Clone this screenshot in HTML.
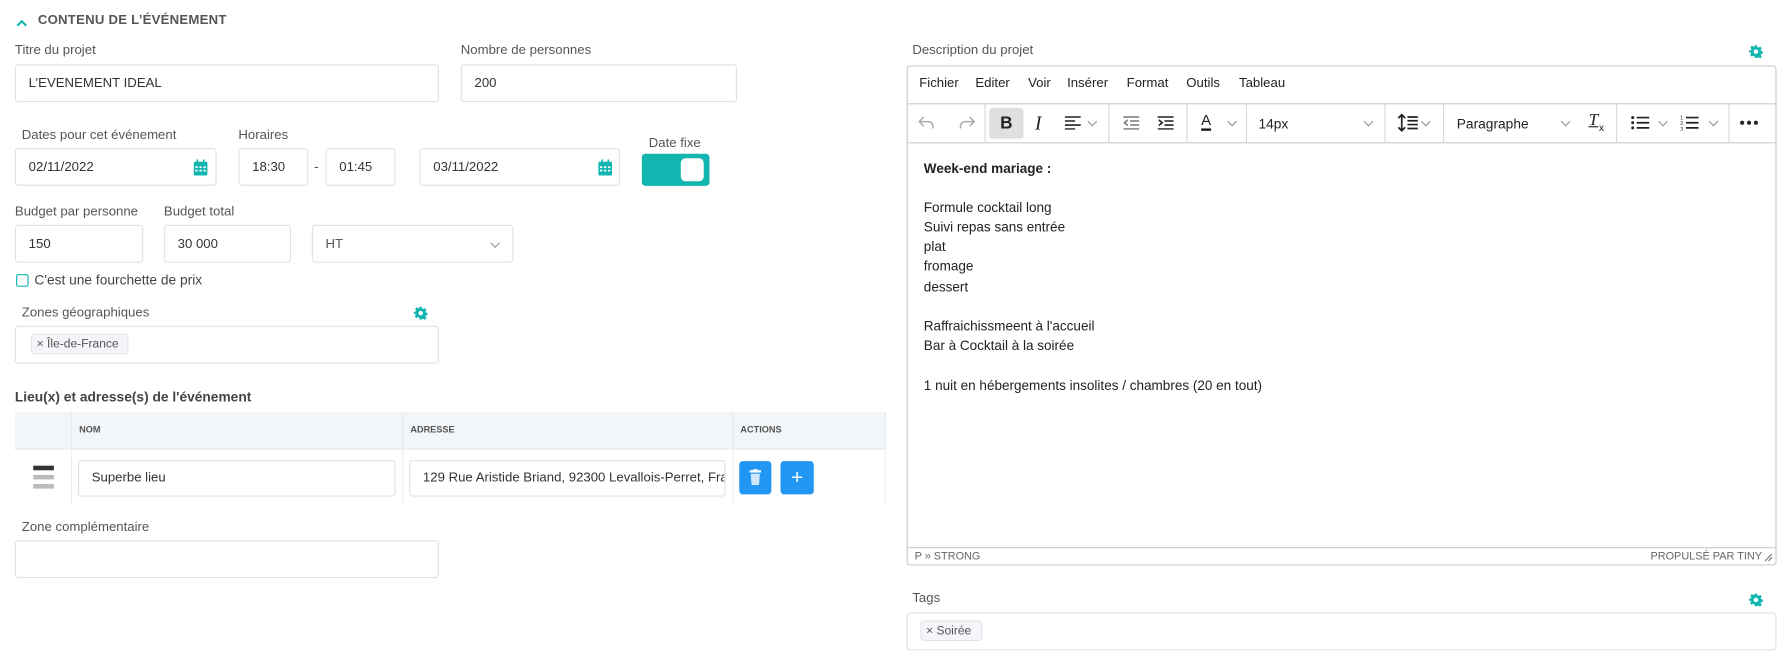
<!DOCTYPE html>
<html><head><meta charset="utf-8"><style>
html,body{margin:0;padding:0;background:#fff;overflow:hidden}
body{width:1788px;height:671px}
#w{position:absolute;left:0;top:0;width:1560px;height:585px;transform:scale(1.14615,1.147);transform-origin:0 0;font-family:"Liberation Sans",sans-serif;color:#333}
.a{position:absolute}
.lbl{position:absolute;font-size:11.5px;color:#555;line-height:14px}
.in{position:absolute;border:1px solid #dfe2e6;border-radius:3px;box-sizing:border-box;font-size:11.5px;color:#333;line-height:14px;display:flex;align-items:center;padding-left:11px;background:#fff}
.gear{position:absolute;width:12px;height:12px}
.chip{position:absolute;background:#f3f5f8;border:1px solid #e2e5ea;border-radius:3px;box-sizing:border-box;font-size:10.5px;color:#555;display:flex;align-items:center;padding-left:4px}
.th{position:absolute;top:359px;height:32px;font-size:8px;font-weight:bold;color:#555;line-height:32px;padding-left:6px;box-sizing:border-box;border-left:1px solid #e6e9ed}
.mi{position:absolute;top:67px;font-size:11.5px;color:#222}
.sep{position:absolute;top:91px;width:1px;height:33px;background:#d8d8d8}
.ed{position:absolute;left:806px;font-size:11.8px;color:#222;line-height:14px}
.cv{position:absolute;width:5px;height:5px;border-right:1px solid #999;border-bottom:1px solid #999;transform:rotate(45deg)}
</style></head><body><div id="w">
<svg class="a" style="left:14px;top:16px" width="10" height="8" viewBox="0 0 10 8"><path d="M1 6.5 5 2.5 9 6.5" fill="none" stroke="#12b5b0" stroke-width="1.8"/></svg>
<div class="a" style="left:33px;top:12px;font-size:11.5px;font-weight:bold;color:#555;letter-spacing:.2px">CONTENU DE L’ÉVÉNEMENT</div>

<div class="lbl" style="left:13px;top:37px">Titre du projet</div>
<div class="in" style="left:13px;top:56px;width:370px;height:33px">L’EVENEMENT IDEAL</div>
<div class="lbl" style="left:402px;top:37px">Nombre de personnes</div>
<div class="in" style="left:402px;top:56px;width:241px;height:33px">200</div>

<div class="lbl" style="left:19px;top:111px">Dates pour cet événement</div>
<div class="in" style="left:13px;top:129px;width:176px;height:33px">02/11/2022</div>
<svg class="a" style="left:169px;top:139px" width="12" height="14" viewBox="0 0 12 14"><rect x="0" y="2" width="12" height="12" rx="1" fill="#12b5b0"/><rect x="2.5" y="0" width="1.5" height="3" fill="#12b5b0"/><rect x="8" y="0" width="1.5" height="3" fill="#12b5b0"/><g fill="#fff"><rect x="1.5" y="6" width="2" height="1.5"/><rect x="5" y="6" width="2" height="1.5"/><rect x="8.5" y="6" width="2" height="1.5"/><rect x="1.5" y="9" width="2" height="1.5"/><rect x="5" y="9" width="2" height="1.5"/><rect x="8.5" y="9" width="2" height="1.5"/></g></svg>
<div class="lbl" style="left:208px;top:111px">Horaires</div>
<div class="in" style="left:208px;top:129px;width:61px;height:33px">18:30</div>
<div class="a" style="left:274px;top:138px;font-size:12px;color:#555">-</div>
<div class="in" style="left:284px;top:129px;width:61px;height:33px">01:45</div>
<div class="in" style="left:366px;top:129px;width:175px;height:33px">03/11/2022</div>
<svg class="a" style="left:522px;top:139px" width="12" height="14" viewBox="0 0 12 14"><rect x="0" y="2" width="12" height="12" rx="1" fill="#12b5b0"/><rect x="2.5" y="0" width="1.5" height="3" fill="#12b5b0"/><rect x="8" y="0" width="1.5" height="3" fill="#12b5b0"/><g fill="#fff"><rect x="1.5" y="6" width="2" height="1.5"/><rect x="5" y="6" width="2" height="1.5"/><rect x="8.5" y="6" width="2" height="1.5"/><rect x="1.5" y="9" width="2" height="1.5"/><rect x="5" y="9" width="2" height="1.5"/><rect x="8.5" y="9" width="2" height="1.5"/></g></svg>
<div class="lbl" style="left:566px;top:118px">Date fixe</div>
<div class="a" style="left:560px;top:134px;width:59px;height:28px;background:#12b5b0;border-radius:3px"></div>
<div class="a" style="left:594px;top:138px;width:20px;height:20px;background:#fff;border-radius:4px"></div>

<div class="lbl" style="left:13px;top:178px">Budget par personne</div>
<div class="in" style="left:13px;top:196px;width:112px;height:33px">150</div>
<div class="lbl" style="left:143px;top:178px">Budget total</div>
<div class="in" style="left:143px;top:196px;width:111px;height:33px">30 000</div>
<div class="in" style="left:272px;top:196px;width:176px;height:33px;color:#555">HT</div>
<div class="cv" style="left:429px;top:209px"></div>
<div class="a" style="left:14px;top:239px;width:11px;height:11px;border:1.5px solid #12b5b0;border-radius:2px;box-sizing:border-box"></div>
<div class="a" style="left:30px;top:237px;font-size:12px;color:#444">C'est une fourchette de prix</div>

<div class="lbl" style="left:19px;top:266px">Zones géographiques</div>
<svg class="gear" style="left:361px;top:267px" viewBox="0 0 24 24"><path fill="#12b5b0" d="M10 1h4l.6 3.2 2 .9 2.8-1.8 2.8 2.8-1.8 2.8.9 2 3.2.6v4l-3.2.6-.9 2 1.8 2.8-2.8 2.8-2.8-1.8-2 .9L14 23h-4l-.6-3.2-2-.9-2.8 1.8-2.8-2.8 1.8-2.8-.9-2L0 14v-4l3.2-.6.9-2L2.3 4.6l2.8-2.8 2.8 1.8 2-.9zM12 8a4 4 0 1 0 0 8 4 4 0 0 0 0-8z"/></svg>
<div class="in" style="left:13px;top:284px;width:370px;height:33px"></div>
<div class="chip" style="left:27px;top:291px;width:85px;height:18px">× Île-de-France</div>

<div class="a" style="left:13px;top:339px;font-size:12px;font-weight:bold;color:#444">Lieu(x) et adresse(s) de l'événement</div>
<div class="a" style="left:13px;top:359px;width:760px;height:32px;background:#f3f6f9;border-bottom:1px solid #e6e9ed"></div>
<div class="th" style="left:62px;width:289px">NOM</div>
<div class="th" style="left:351px;width:288px">ADRESSE</div>
<div class="th" style="left:639px;width:134px;border-right:1px solid #e6e9ed">ACTIONS</div>
<div class="a" style="left:62px;top:391px;width:1px;height:50px;background:#eceef1"></div>
<div class="a" style="left:351px;top:391px;width:1px;height:50px;background:#eceef1"></div>
<div class="a" style="left:639px;top:391px;width:1px;height:50px;background:#eceef1"></div>
<div class="a" style="left:772px;top:391px;width:1px;height:50px;background:#eceef1"></div>
<div class="a" style="left:29px;top:406px;width:18px;height:4px;background:#333"></div>
<div class="a" style="left:29px;top:414px;width:18px;height:4px;background:#bbb"></div>
<div class="a" style="left:29px;top:422px;width:18px;height:4px;background:#bbb"></div>
<div class="in" style="left:68px;top:401px;width:277px;height:32px">Superbe lieu</div>
<div class="in" style="left:357px;top:401px;width:276px;height:32px;overflow:hidden;white-space:nowrap">129 Rue Aristide Briand, 92300 Levallois-Perret, France</div>
<div class="a" style="left:645px;top:402px;width:28px;height:29px;background:#2196f3;border-radius:3px"></div>
<svg class="a" style="left:654px;top:409px" width="10" height="14" viewBox="0 0 10 14"><rect x="0" y="1" width="10" height="2" fill="#fff"/><rect x="3" y="0" width="4" height="2" fill="#fff"/><path d="M1 4h8l-.7 10H1.7z" fill="#cfe6fb"/></svg>
<div class="a" style="left:681px;top:402px;width:29px;height:29px;background:#2196f3;border-radius:3px;color:#fff;font-size:18px;text-align:center;line-height:28px">+</div>

<div class="lbl" style="left:19px;top:453px">Zone complémentaire</div>
<div class="in" style="left:13px;top:471px;width:370px;height:33px"></div>

<div class="lbl" style="left:796px;top:37px">Description du projet</div>
<svg class="gear" style="left:1526px;top:39px" viewBox="0 0 24 24"><path fill="#12b5b0" d="M10 1h4l.6 3.2 2 .9 2.8-1.8 2.8 2.8-1.8 2.8.9 2 3.2.6v4l-3.2.6-.9 2 1.8 2.8-2.8 2.8-2.8-1.8-2 .9L14 23h-4l-.6-3.2-2-.9-2.8 1.8-2.8-2.8 1.8-2.8-.9-2L0 14v-4l3.2-.6.9-2L2.3 4.6l2.8-2.8 2.8 1.8 2-.9zM12 8a4 4 0 1 0 0 8 4 4 0 0 0 0-8z"/></svg>
<div class="a" style="left:791px;top:57px;width:759px;height:436px;border:1px solid #ccc;border-radius:3px;box-sizing:border-box"></div>
<div class="a" style="left:792px;top:90px;width:757px;height:1px;background:#ccc"></div>
<div class="a" style="left:792px;top:124px;width:757px;height:1px;background:#ccc"></div>
<div class="a" style="left:792px;top:477px;width:757px;height:1px;background:#ccc"></div>
<div class="mi" style="left:802px">Fichier</div><div class="mi" style="left:851px">Editer</div><div class="mi" style="left:897px">Voir</div><div class="mi" style="left:931px">Insérer</div><div class="mi" style="left:983px">Format</div><div class="mi" style="left:1035px">Outils</div><div class="mi" style="left:1081px">Tableau</div>
<div class="sep" style="left:859px"></div><div class="sep" style="left:967px"></div><div class="sep" style="left:1035px"></div><div class="sep" style="left:1087px"></div><div class="sep" style="left:1208px"></div><div class="sep" style="left:1259px"></div><div class="sep" style="left:1410px"></div><div class="sep" style="left:1508px"></div>
<svg class="a" style="left:801px;top:100px" width="50" height="14" viewBox="0 0 50 14"><path d="M5 2 1 6l4 4M1 6h8a4 4 0 0 1 4 4v2" fill="none" stroke="#aaa" stroke-width="1.3"/><path d="M45 2l4 4-4 4M49 6h-8a4 4 0 0 0-4 4v2" fill="none" stroke="#aaa" stroke-width="1.3"/></svg>
<div class="a" style="left:863px;top:94px;width:30px;height:27px;background:#dee0e2;border-radius:3px;font-weight:bold;font-size:15px;text-align:center;line-height:27px;color:#222">B</div>
<div class="a" style="left:903px;top:98px;font-family:'Liberation Serif',serif;font-style:italic;font-size:17px;color:#222">I</div>
<svg class="a" style="left:929px;top:101px" width="14" height="12" viewBox="0 0 14 12"><path d="M0 1h14M0 4.5h9M0 8h14M0 11.5h9" stroke="#222" stroke-width="1.4"/></svg>
<div class="cv" style="left:950px;top:103px"></div>
<svg class="a" style="left:980px;top:101px" width="14" height="12" viewBox="0 0 14 12"><path d="M0 1h14M6 4.5h8M6 8h8M0 11.5h14" stroke="#777" stroke-width="1.3"/><path d="M4 3.5 1 6l3 2.5" fill="none" stroke="#777" stroke-width="1.3"/></svg>
<svg class="a" style="left:1010px;top:101px" width="14" height="12" viewBox="0 0 14 12"><path d="M0 1h14M6 4.5h8M6 8h8M0 11.5h14" stroke="#222" stroke-width="1.4"/><path d="M1 3.5 4 6l-3 2.5" fill="none" stroke="#222" stroke-width="1.4"/></svg>
<div class="a" style="left:1048px;top:97px;font-size:13px;color:#222;text-decoration:underline 2px #111;text-underline-offset:3px">A</div>
<div class="cv" style="left:1072px;top:103px"></div>
<div class="a" style="left:1098px;top:101px;font-size:12px;color:#222">14px</div>
<div class="cv" style="left:1191px;top:103px"></div>
<svg class="a" style="left:1219px;top:99px" width="20" height="16" viewBox="0 0 20 16"><path d="M4 1v14M1 4l3-3 3 3M1 12l3 3 3-3" fill="none" stroke="#222" stroke-width="1.5"/><path d="M9 3h9M9 6.3h9M9 9.6h9M9 13h9" stroke="#222" stroke-width="1.5"/></svg>
<div class="cv" style="left:1241px;top:103px"></div>
<div class="a" style="left:1271px;top:101px;font-size:12px;color:#222">Paragraphe</div>
<div class="cv" style="left:1363px;top:103px"></div>
<div class="a" style="left:1386px;top:97px;font-family:'Liberation Serif',serif;font-style:italic;font-size:15px;color:#222;text-decoration:underline;">T</div><div class="a" style="left:1395px;top:106px;font-size:9px;color:#222">x</div>
<svg class="a" style="left:1423px;top:101px" width="16" height="12" viewBox="0 0 16 12"><g fill="#222"><circle cx="1.5" cy="1.5" r="1.3"/><circle cx="1.5" cy="6" r="1.3"/><circle cx="1.5" cy="10.5" r="1.3"/></g><path d="M5 1.5h11M5 6h11M5 10.5h11" stroke="#222" stroke-width="1.5"/></svg>
<div class="cv" style="left:1448px;top:103px"></div>
<svg class="a" style="left:1466px;top:100px" width="16" height="14" viewBox="0 0 16 14"><text x="0" y="4" font-size="4.5" fill="#222" font-family="Liberation Sans">1</text><text x="0" y="9" font-size="4.5" fill="#222" font-family="Liberation Sans">2</text><text x="0" y="14" font-size="4.5" fill="#222" font-family="Liberation Sans">3</text><path d="M5 2.5h11M5 7h11M5 11.5h11" stroke="#222" stroke-width="1.5"/></svg>
<div class="cv" style="left:1492px;top:103px"></div>
<svg class="a" style="left:1518px;top:105px" width="16" height="4" viewBox="0 0 16 4"><g fill="#222"><circle cx="2" cy="2" r="1.8"/><circle cx="8" cy="2" r="1.8"/><circle cx="14" cy="2" r="1.8"/></g></svg>

<div class="ed" style="top:140px;font-weight:bold">Week-end mariage :</div>
<div class="ed" style="top:174px">Formule cocktail long</div>
<div class="ed" style="top:191px">Suivi repas sans entrée</div>
<div class="ed" style="top:208px">plat</div>
<div class="ed" style="top:225px">fromage</div>
<div class="ed" style="top:243px">dessert</div>
<div class="ed" style="top:277px">Raffraichissmeent à l'accueil</div>
<div class="ed" style="top:294px">Bar à Cocktail à la soirée</div>
<div class="ed" style="top:329px">1 nuit en hébergements insolites / chambres (20 en tout)</div>
<div class="a" style="left:798px;top:480px;font-size:9.5px;color:#666">P » STRONG</div>
<div class="a" style="left:1440px;top:480px;font-size:9.5px;color:#666">PROPULSÉ PAR TINY</div>
<svg class="a" style="left:1539px;top:482px" width="8" height="8" viewBox="0 0 8 8"><path d="M7 1 1 7M7 4 4 7" stroke="#777" stroke-width="1"/></svg>

<div class="lbl" style="left:796px;top:515px">Tags</div>
<svg class="gear" style="left:1526px;top:517px" viewBox="0 0 24 24"><path fill="#12b5b0" d="M10 1h4l.6 3.2 2 .9 2.8-1.8 2.8 2.8-1.8 2.8.9 2 3.2.6v4l-3.2.6-.9 2 1.8 2.8-2.8 2.8-2.8-1.8-2 .9L14 23h-4l-.6-3.2-2-.9-2.8 1.8-2.8-2.8 1.8-2.8-.9-2L0 14v-4l3.2-.6.9-2L2.3 4.6l2.8-2.8 2.8 1.8 2-.9zM12 8a4 4 0 1 0 0 8 4 4 0 0 0 0-8z"/></svg>
<div class="in" style="left:791px;top:534px;width:759px;height:33px"></div>
<div class="chip" style="left:803px;top:541px;width:54px;height:18px">× Soirée</div>
</div></body></html>
